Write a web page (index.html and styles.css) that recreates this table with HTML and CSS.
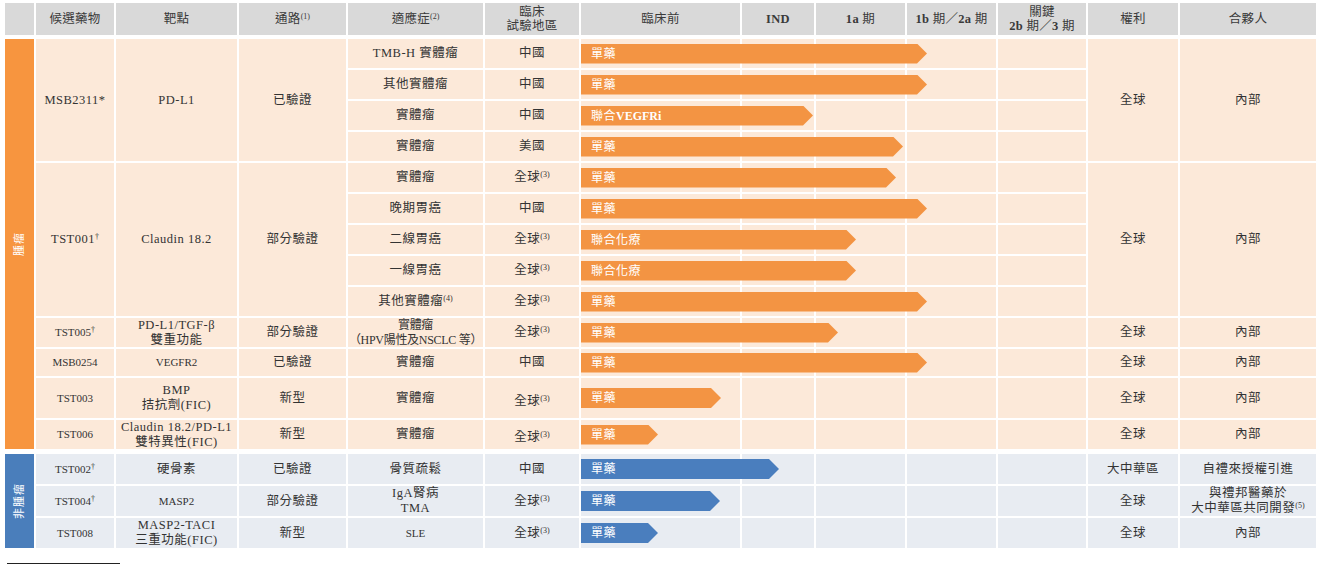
FILE: index.html
```html
<!DOCTYPE html>
<html lang="zh-Hant">
<head>
<meta charset="utf-8">
<title>Pipeline</title>
<link rel="stylesheet" href="styles.css">
</head>
<body>
<div class="page">
  <div class="grid">
    <!-- header -->
    <div class="cell hd"></div>
    <div class="cell hd"><span>候選藥物</span></div>
    <div class="cell hd"><span>靶點</span></div>
    <div class="cell hd"><span>通路<sup class="sup">(1)</sup></span></div>
    <div class="cell hd"><span>適應症<sup class="sup">(2)</sup></span></div>
    <div class="cell hd"><span>臨床<br>試驗地區</span></div>
    <div class="cell hd"><span>臨床前</span></div>
    <div class="cell hd"><span><b>IND</b></span></div>
    <div class="cell hd"><span><b>1a</b> 期</span></div>
    <div class="cell hd"><span><b>1b</b> 期／<b>2a</b> 期</span></div>
    <div class="cell hd"><span>關鍵<br><b>2b</b> 期／<b>3</b> 期</span></div>
    <div class="cell hd"><span>權利</span></div>
    <div class="cell hd"><span>合夥人</span></div>
    <div class="spacer"></div>

    <!-- MSB2311 -->
    <div class="cell side side-on span13"><span class="vlabel">腫瘤</span></div>
    <div class="cell on span4"><span>MSB2311*</span></div>
    <div class="cell on span4"><span>PD-L1</span></div>
    <div class="cell on span4"><span>已驗證</span></div>
    <div class="cell on"><span>TMB-H 實體瘤</span></div>
    <div class="cell on"><span>中國</span></div>
    <div class="cell on pre"><div class="arrow a-on" style="width:346px">單藥</div></div>
    <div class="cell on"></div><div class="cell on"></div><div class="cell on"></div><div class="cell on"></div>
    <div class="cell on span4"><span>全球</span></div>
    <div class="cell on span4"><span>內部</span></div>

    <div class="cell on"><span>其他實體瘤</span></div>
    <div class="cell on"><span>中國</span></div>
    <div class="cell on pre"><div class="arrow a-on" style="width:346px">單藥</div></div>
    <div class="cell on"></div><div class="cell on"></div><div class="cell on"></div><div class="cell on"></div>

    <div class="cell on"><span>實體瘤</span></div>
    <div class="cell on"><span>中國</span></div>
    <div class="cell on pre"><div class="arrow a-on" style="width:232px">聯合<b>VEGFRi</b></div></div>
    <div class="cell on"></div><div class="cell on"></div><div class="cell on"></div><div class="cell on"></div>

    <div class="cell on"><span>實體瘤</span></div>
    <div class="cell on"><span>美國</span></div>
    <div class="cell on pre"><div class="arrow a-on" style="width:322px">單藥</div></div>
    <div class="cell on"></div><div class="cell on"></div><div class="cell on"></div><div class="cell on"></div>

    <!-- TST001 -->
    <div class="cell on span5"><span>TST001<sup class="sup">†</sup></span></div>
    <div class="cell on span5"><span>Claudin 18.2</span></div>
    <div class="cell on span5"><span>部分驗證</span></div>
    <div class="cell on"><span>實體瘤</span></div>
    <div class="cell on"><span>全球<sup class="sup">(3)</sup></span></div>
    <div class="cell on pre"><div class="arrow a-on" style="width:315px">單藥</div></div>
    <div class="cell on"></div><div class="cell on"></div><div class="cell on"></div><div class="cell on"></div>
    <div class="cell on span5"><span>全球</span></div>
    <div class="cell on span5"><span>內部</span></div>

    <div class="cell on"><span>晚期胃癌</span></div>
    <div class="cell on"><span>中國</span></div>
    <div class="cell on pre"><div class="arrow a-on" style="width:346px">單藥</div></div>
    <div class="cell on"></div><div class="cell on"></div><div class="cell on"></div><div class="cell on"></div>

    <div class="cell on"><span>二線胃癌</span></div>
    <div class="cell on"><span>全球<sup class="sup">(3)</sup></span></div>
    <div class="cell on pre"><div class="arrow a-on" style="width:275px">聯合化療</div></div>
    <div class="cell on"></div><div class="cell on"></div><div class="cell on"></div><div class="cell on"></div>

    <div class="cell on"><span>一線胃癌</span></div>
    <div class="cell on"><span>全球<sup class="sup">(3)</sup></span></div>
    <div class="cell on pre"><div class="arrow a-on" style="width:275px">聯合化療</div></div>
    <div class="cell on"></div><div class="cell on"></div><div class="cell on"></div><div class="cell on"></div>

    <div class="cell on"><span>其他實體瘤<sup class="sup">(4)</sup></span></div>
    <div class="cell on"><span>全球<sup class="sup">(3)</sup></span></div>
    <div class="cell on pre"><div class="arrow a-on" style="width:346px">單藥</div></div>
    <div class="cell on"></div><div class="cell on"></div><div class="cell on"></div><div class="cell on"></div>

    <!-- TST005 -->
    <div class="cell on sm"><span>TST005<sup class="sup">†</sup></span></div>
    <div class="cell on"><span>PD-L1/TGF-β<br>雙重功能</span></div>
    <div class="cell on"><span>部分驗證</span></div>
    <div class="cell on"><span class="nw">實體瘤<br>（HPV陽性及NSCLC 等）</span></div>
    <div class="cell on"><span>全球<sup class="sup">(3)</sup></span></div>
    <div class="cell on pre"><div class="arrow a-on" style="width:257px">單藥</div></div>
    <div class="cell on"></div><div class="cell on"></div><div class="cell on"></div><div class="cell on"></div>
    <div class="cell on"><span>全球</span></div>
    <div class="cell on"><span>內部</span></div>

    <!-- MSB0254 -->
    <div class="cell on sm"><span>MSB0254</span></div>
    <div class="cell on sm"><span>VEGFR2</span></div>
    <div class="cell on"><span>已驗證</span></div>
    <div class="cell on"><span>實體瘤</span></div>
    <div class="cell on"><span>中國</span></div>
    <div class="cell on pre"><div class="arrow a-on" style="width:346px">單藥</div></div>
    <div class="cell on"></div><div class="cell on"></div><div class="cell on"></div><div class="cell on"></div>
    <div class="cell on"><span>全球</span></div>
    <div class="cell on"><span>內部</span></div>

    <!-- TST003 -->
    <div class="cell on sm"><span>TST003</span></div>
    <div class="cell on"><span>BMP<br>拮抗劑(FIC)</span></div>
    <div class="cell on"><span>新型</span></div>
    <div class="cell on"><span>實體瘤</span></div>
    <div class="cell on low"><span>全球<sup class="sup">(3)</sup></span></div>
    <div class="cell on pre"><div class="arrow a-on" style="width:140px">單藥</div></div>
    <div class="cell on"></div><div class="cell on"></div><div class="cell on"></div><div class="cell on"></div>
    <div class="cell on"><span>全球</span></div>
    <div class="cell on"><span>內部</span></div>

    <!-- TST006 -->
    <div class="cell on sm"><span>TST006</span></div>
    <div class="cell on"><span>Claudin 18.2/PD-L1<br>雙特異性(FIC)</span></div>
    <div class="cell on"><span>新型</span></div>
    <div class="cell on"><span>實體瘤</span></div>
    <div class="cell on low"><span>全球<sup class="sup">(3)</sup></span></div>
    <div class="cell on pre"><div class="arrow a-on" style="width:77px">單藥</div></div>
    <div class="cell on"></div><div class="cell on"></div><div class="cell on"></div><div class="cell on"></div>
    <div class="cell on"><span>全球</span></div>
    <div class="cell on"><span>內部</span></div>

    <div class="spacer"></div>

    <!-- TST002 -->
    <div class="cell side side-off span3"><span class="vlabel">非腫瘤</span></div>
    <div class="cell off sm"><span>TST002<sup class="sup">†</sup></span></div>
    <div class="cell off"><span>硬骨素</span></div>
    <div class="cell off"><span>已驗證</span></div>
    <div class="cell off"><span>骨質疏鬆</span></div>
    <div class="cell off"><span>中國</span></div>
    <div class="cell off pre"><div class="arrow a-off" style="width:198px">單藥</div></div>
    <div class="cell off"></div><div class="cell off"></div><div class="cell off"></div><div class="cell off"></div>
    <div class="cell off"><span>大中華區</span></div>
    <div class="cell off"><span>自禮來授權引進</span></div>

    <!-- TST004 -->
    <div class="cell off sm"><span>TST004<sup class="sup">†</sup></span></div>
    <div class="cell off sm"><span>MASP2</span></div>
    <div class="cell off"><span>部分驗證</span></div>
    <div class="cell off"><span>IgA腎病<br>TMA</span></div>
    <div class="cell off"><span>全球<sup class="sup">(3)</sup></span></div>
    <div class="cell off pre"><div class="arrow a-off" style="width:139px">單藥</div></div>
    <div class="cell off"></div><div class="cell off"></div><div class="cell off"></div><div class="cell off"></div>
    <div class="cell off"><span>全球</span></div>
    <div class="cell off"><span>與禮邦醫藥於<br>大中華區共同開發<sup class="sup">(5)</sup></span></div>

    <!-- TST008 -->
    <div class="cell off sm"><span>TST008</span></div>
    <div class="cell off"><span>MASP2-TACI<br>三重功能(FIC)</span></div>
    <div class="cell off"><span>新型</span></div>
    <div class="cell off sm"><span>SLE</span></div>
    <div class="cell off"><span>全球<sup class="sup">(3)</sup></span></div>
    <div class="cell off pre"><div class="arrow a-off" style="width:77px">單藥</div></div>
    <div class="cell off"></div><div class="cell off"></div><div class="cell off"></div><div class="cell off"></div>
    <div class="cell off"><span>全球</span></div>
    <div class="cell off"><span>內部</span></div>
  </div>
  <div class="rule"></div>
</div>
</body>
</html>
```

FILE: styles.css
```css
html, body {
  margin: 0;
  padding: 0;
  background: #ffffff;
}

body {
  font-family: "Liberation Serif", "Noto Sans CJK TC", serif;
  color: #333333;
}

.page {
  padding: 3px 0 0 5px;
}

.grid {
  display: grid;
  grid-template-columns: 29px 78px 121px 107px 135px 94px 159px 72px 89px 89px 88px 90px 136px;
  grid-template-rows: 32px 0 repeat(10, 29px) 27px 40px 29px 1px repeat(3, 30px);
  gap: 2px;
}

.spacer {
  grid-column: 1 / -1;
}

.cell {
  display: flex;
  align-items: center;
  justify-content: center;
  text-align: center;
  font-size: 12.5px;
  line-height: 15px;
  letter-spacing: 0.5px;
  min-width: 0;
}

.hd {
  background: #d9d9d9;
  color: #3a3a3a;
  font-size: 12.5px;
  line-height: 14px;
  letter-spacing: 0.3px;
  white-space: nowrap;
}

.hd b {
  font-weight: bold;
}

.on {
  background: #fce9d9;
}

.off {
  background: #e8ecf2;
}

.side-on {
  background: #f7953f;
}

.side-off {
  background: #4a7ebb;
}

.span13 { grid-row: span 13; }
.span5 { grid-row: span 5; }
.span4 { grid-row: span 4; }
.span3 { grid-row: span 3; }

.vlabel {
  writing-mode: vertical-rl;
  text-orientation: sideways;
  transform: rotate(180deg);
  color: #ffffff;
  font-size: 11px;
  letter-spacing: 1px;
}

.sm {
  font-size: 11px;
  letter-spacing: 0;
}

.nw {
  white-space: nowrap;
  font-size: 12px;
  letter-spacing: -0.3px;
}

.low {
  padding-top: 6px;
}

.sup {
  font-size: 8px;
  line-height: 0;
  letter-spacing: 0;
  vertical-align: 4px;
}

.pre {
  justify-content: flex-start;
}

.arrow {
  position: relative;
  z-index: 1;
  flex-shrink: 0;
  height: 20px;
  line-height: 20px;
  padding-left: 10px;
  box-sizing: border-box;
  color: #ffffff;
  font-size: 12px;
  letter-spacing: 0.5px;
  text-align: left;
  white-space: nowrap;
  clip-path: polygon(0 0, calc(100% - 10px) 0, 100% 50%, calc(100% - 10px) 100%, 0 100%);
}

.arrow b {
  font-weight: bold;
  letter-spacing: 0;
}

.a-on {
  background: #f39443;
}

.a-off {
  background: #4a7ebe;
}

.rule {
  width: 113px;
  border-top: 1px solid #222222;
  margin: 15px 0 0 2px;
}
```
